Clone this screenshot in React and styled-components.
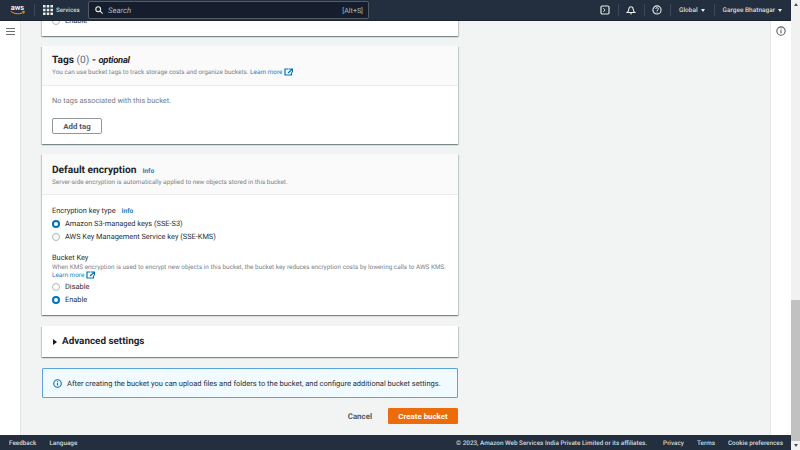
import React from 'react';
import styled, { createGlobalStyle } from 'styled-components';

const GlobalStyle = createGlobalStyle`
  html, body { margin: 0; padding: 0; height: 100%; overflow: hidden; }
  #root { height: 100%; }
  * { box-sizing: border-box; }
  body { font-family: Roboto, "Noto Sans", sans-serif; color: #16191f; text-rendering: geometricPrecision; }
`;

const Page = styled.div`
  display: flex;
  width: 800px;
  height: 450px;
  overflow: hidden;
  background: #f2f3f3;
`;

const Console = styled.div`
  flex: 1;
  min-width: 0;
  display: flex;
  flex-direction: column;
`;

const TopBar = styled.header`
  flex: 0 0 21px;
  display: flex;
  align-items: center;
  background: #232f3e;
  color: #d5dbdb;
  font-size: 6.5px;
  font-weight: 500;
  border-bottom: 1px solid #1a2430;
`;

const Logo = styled.svg`
  width: 17px;
  height: 12px;
  margin-left: 9px;
`;

const BarDivider = styled.span`
  width: 1px;
  height: 12px;
  background: #3b4757;
  margin: ${p => p.$margin || '0'};
`;

const Services = styled.div`
  display: flex;
  align-items: center;
  gap: 3px;
  width: 45px;
  font-size: 6.2px;
`;

const SearchBox = styled.div`
  width: 281px;
  height: 18px;
  display: flex;
  align-items: center;
  padding: 0 5px 0 6px;
  background: #161e2d;
  border: 1px solid #545b64;
  border-radius: 2px;
  font-size: 7.1px;
  font-weight: 400;
  color: #aab7b8;
`;

const SearchText = styled.span`
  flex: 1;
  margin-left: 5px;
  font-style: italic;
  font-size: 7.8px;
`;

const BarRight = styled.div`
  margin-left: auto;
  padding-right: 9px;
  display: flex;
  align-items: center;
`;

const BarIcon = styled.svg`
  width: 10px;
  height: 10px;
  display: block;
`;

const Caret = styled.i`
  display: inline-block;
  width: 0;
  height: 0;
  margin-left: 3px;
  border-left: 2.6px solid transparent;
  border-right: 2.6px solid transparent;
  border-top: 3.4px solid #e8ecec;
`;

const BarMenu = styled.span`
  display: flex;
  align-items: center;
  white-space: nowrap;
`;

const Middle = styled.div`
  flex: 1;
  min-height: 0;
  display: flex;
`;

const Rail = styled.aside`
  width: ${p => p.$width}px;
  flex: none;
  background: #fff;
  display: flex;
  justify-content: center;
  padding-top: ${p => p.$top}px;
  border-${p => p.$side}: 1px solid #e3e5e5;
`;

const Content = styled.main`
  flex: 1;
  min-width: 0;
  height: 414px;
  overflow: hidden;
  display: flex;
  flex-direction: column;
  justify-content: flex-end;
  padding: 0 312px 11px 21px;
`;

const Card = styled.section`
  flex: none;
  background: #fff;
  box-shadow: 0 1px 1px 0 rgba(0, 28, 36, 0.3), 1px 1px 1px 0 rgba(0, 28, 36, 0.15), -1px 1px 1px 0 rgba(0, 28, 36, 0.15);
  margin-bottom: ${p => p.$gap || 10}px;
`;

const CardHead = styled.div`
  height: ${p => p.$height}px;
  padding: ${p => p.$top}px 10px 0;
  background: #fafafa;
  border-bottom: 1px solid #eaeded;
`;

const CardBody = styled.div`
  padding: ${p => p.$padding};
`;

const Title = styled.h2`
  margin: 0;
  font-size: 10.2px;
  line-height: 14px;
  font-weight: 700;
  color: #1f252c;
`;

const TitleMuted = styled.span`
  font-weight: 400;
  color: #687078;
`;

const Optional = styled.em`
  font-size: 9.4px;
  letter-spacing: -0.25px;
`;

const Info = styled.a`
  color: #1a7fc1;
  font-size: 6.6px;
  font-weight: 700;
  margin-left: ${p => p.$left}px;
`;

const Description = styled.p`
  margin: ${p => p.$margin || '0'};
  font-size: 6.4px;
  line-height: 8px;
  color: #7a8288;
`;

const Learn = styled.a`
  color: #1a7fc1;
  display: ${p => (p.$block ? 'flex' : 'inline-flex')};
  align-items: center;
  gap: 2px;
  vertical-align: top;
`;

const ExternalIcon = styled.svg`
  width: 9px;
  height: 8px;
`;

const BodyText = styled.p`
  margin: 0;
  font-size: 7.4px;
  line-height: 10px;
  color: #747c82;
`;

const OutlineButton = styled.button`
  display: block;
  width: 50px;
  height: 16px;
  margin-top: 12px;
  padding: 0;
  background: #fff;
  border: 1px solid #8f969c;
  border-radius: 2px;
  font: 700 7.9px Roboto, sans-serif;
  color: #545b64;
`;

const FieldLabel = styled.div`
  font-size: 7.4px;
  line-height: 10px;
  color: #2a3037;
  margin-top: ${p => p.$top || 0}px;
`;

const RadioRow = styled.label`
  display: flex;
  align-items: center;
  gap: 5px;
  height: 13px;
  font-size: 7.4px;
  color: #2a3037;
`;

const Radio = styled.span`
  width: 8px;
  height: 8px;
  border-radius: 50%;
  flex: none;
  background: #fff;
  border: ${p => (p.$checked ? '2.4px solid #0073bb' : '1px solid #aab7b8')};
`;

const RadioGroup = styled.div`
  margin-top: ${p => p.$top || 0}px;
`;

const Disclosure = styled.div`
  height: 31px;
  display: flex;
  align-items: center;
  padding-left: 11px;
  gap: 5px;
  font-size: 9.9px;
  font-weight: 700;
  color: #1f252c;
`;

const Triangle = styled.i`
  width: 0;
  height: 0;
  border-top: 3px solid transparent;
  border-bottom: 3px solid transparent;
  border-left: 4.5px solid #16191f;
`;

const Alert = styled.div`
  flex: none;
  height: 30px;
  display: flex;
  align-items: center;
  gap: 5px;
  padding-left: 10px;
  margin-bottom: 10px;
  background: #f1faff;
  border: 1px solid #5aa5d6;
  border-radius: 1px;
  font-size: 7.5px;
  color: #2a3037;
  white-space: nowrap;
`;

const Actions = styled.div`
  flex: none;
  display: flex;
  justify-content: flex-end;
  align-items: center;
  gap: 16px;
`;

const Cancel = styled.span`
  font-size: 7.9px;
  font-weight: 700;
  color: #545b64;
`;

const Primary = styled.button`
  width: 70px;
  height: 16px;
  padding: 0;
  background: #ec6c0c;
  border: 1px solid #ec6c0c;
  border-radius: 1px;
  font: 700 7.9px Roboto, sans-serif;
  color: #fff;
`;

const Footer = styled.footer`
  flex: 0 0 15px;
  display: flex;
  align-items: center;
  padding: 0 8px 0 9px;
  background: #232f3e;
  color: #d5dbdb;
  font-size: 6.35px;
  font-weight: 500;
`;

const FooterItem = styled.span`
  margin-left: ${p => (p.$auto ? 'auto' : `${p.$left || 0}px`)};
  white-space: nowrap;
`;

const Scrollbar = styled.div`
  width: 9px;
  flex: none;
  display: flex;
  flex-direction: column;
  align-items: center;
  background: #f1f1f1;
`;

const ScrollArrow = styled.i`
  flex: none;
  width: 0;
  height: 0;
  margin: ${p => p.$margin};
  border-left: 2.5px solid transparent;
  border-right: 2.5px solid transparent;
  ${p => (p.$up ? 'border-bottom: 3px solid #505050;' : 'border-top: 3px solid #505050;')}
`;

const ScrollThumb = styled.div`
  width: 100%;
  height: 141px;
  margin-top: auto;
  background: #c1c1c1;
`;

const External = () => (
  <ExternalIcon viewBox="0 0 18 16" fill="none" stroke="#0073bb" strokeWidth="2.4">
    <path d="M8 2H2v12h13V9" />
    <path d="M9 2h8v7M16 3l-8 7" />
  </ExternalIcon>
);

export default function App() {
  return (
    <Page>
      <GlobalStyle />
      <Console>
        <TopBar>
          <Logo viewBox="0 0 34 24" fill="none">
            <text x="17" y="12" textAnchor="middle" fontFamily="Roboto" fontSize="15" fontWeight="500" fill="#fff">aws</text>
            <path d="M4 15c8 6 18 6 26 1" stroke="#ff9900" strokeWidth="2" strokeLinecap="round" />
            <path d="M26 14.5l5 .5-2 4.5" stroke="#ff9900" strokeWidth="1.6" />
          </Logo>
          <BarDivider $margin="0 8px" />
          <Services>
            <svg width="10" height="10" viewBox="0 0 9 9" fill="#e8ecec">
              <path d="M0 0h2.3v2.3H0zM3.35 0h2.3v2.3h-2.3zM6.7 0H9v2.3H6.7zM0 3.35h2.3v2.3H0zM3.35 3.35h2.3v2.3h-2.3zM6.7 3.35H9v2.3H6.7zM0 6.7h2.3V9H0zM3.35 6.7h2.3V9h-2.3zM6.7 6.7H9V9H6.7z" />
            </svg>
            Services
          </Services>
          <SearchBox>
            <svg width="8" height="8" viewBox="0 0 10 10" fill="none" stroke="#e8ecec" strokeWidth="1.4">
              <circle cx="4" cy="4" r="3" />
              <path d="M6.2 6.2L9.5 9.5" />
            </svg>
            <SearchText>Search</SearchText>
            <span>[Alt+S]</span>
          </SearchBox>
          <BarRight>
            <BarIcon viewBox="0 0 12 12" fill="none" stroke="#e8ecec" strokeWidth="1.4">
              <rect x="1.2" y="1.2" width="9.6" height="9.6" rx="1.4" />
              <path d="M4 3.8L6.2 6 4 8.2" strokeWidth="1.1" />
            </BarIcon>
            <BarDivider $margin="0 7px 0 8px" />
            <BarIcon viewBox="0 0 12 12" fill="none" stroke="#e8ecec" strokeWidth="1.3">
              <path d="M1.5 9c1.2-1 1.6-2 1.8-3.6C3.5 3.4 4.5 2 6 2s2.5 1.4 2.7 3.4C8.9 7 9.3 8 10.5 9z" />
              <path d="M5 10.4h2" />
            </BarIcon>
            <BarDivider $margin="0 7px 0 8px" />
            <BarIcon viewBox="0 0 12 12" fill="none" stroke="#e8ecec" strokeWidth="1.3">
              <circle cx="6" cy="6" r="4.9" />
              <path d="M4.4 4.6C4.5 3.6 5.2 3.2 6 3.2c1 0 1.7.6 1.7 1.4 0 1.2-1.7 1.3-1.7 2.6M6 8v1" strokeWidth="1.1" />
            </BarIcon>
            <BarDivider $margin="0 8px 0 8px" />
            <BarMenu>Global<Caret /></BarMenu>
            <BarDivider $margin="0 8px 0 9px" />
            <BarMenu>Gargee Bhatnagar<Caret /></BarMenu>
          </BarRight>
        </TopBar>
        <Middle>
          <Rail $width={21} $top={6} $side="right">
            <svg width="9" height="9" viewBox="0 0 9 9" fill="none" stroke="#687078" strokeWidth="1.1">
              <path d="M0 1.5h9M0 4.5h9M0 7.5h9" />
            </svg>
          </Rail>
          <Content>
            <Card>
              <CardBody $padding="0 10px 9px">
                <RadioRow><Radio /><span>Enable</span></RadioRow>
              </CardBody>
            </Card>
            <Card>
              <CardHead $height={40} $top={8}>
                <Title>Tags <TitleMuted>(0)</TitleMuted> - <Optional>optional</Optional></Title>
                <Description>
                  You can use bucket tags to track storage costs and organize buckets. <Learn>Learn more <External /></Learn>
                </Description>
              </CardHead>
              <CardBody $padding="10px 10px 10px">
                <BodyText>No tags associated with this bucket.</BodyText>
                <OutlineButton>Add tag</OutlineButton>
              </CardBody>
            </Card>
            <Card $gap={11}>
              <CardHead $height={41} $top={10}>
                <Title>Default encryption<Info $left={6}>Info</Info></Title>
                <Description>Server-side encryption is automatically applied to new objects stored in this bucket.</Description>
              </CardHead>
              <CardBody $padding="11px 10px 9px">
                <FieldLabel>Encryption key type<Info $left={6}>Info</Info></FieldLabel>
                <RadioGroup $top={1}>
                  <RadioRow><Radio $checked /><span>Amazon S3-managed keys (SSE-S3)</span></RadioRow>
                  <RadioRow><Radio /><span>AWS Key Management Service key (SSE-KMS)</span></RadioRow>
                </RadioGroup>
                <FieldLabel $top={10}>Bucket Key</FieldLabel>
                <Description>
                  When KMS encryption is used to encrypt new objects in this bucket, the bucket key reduces encryption costs by lowering calls to AWS KMS.
                  <Learn $block>Learn more <External /></Learn>
                </Description>
                <RadioGroup $top={1}>
                  <RadioRow><Radio /><span>Disable</span></RadioRow>
                  <RadioRow><Radio $checked /><span>Enable</span></RadioRow>
                </RadioGroup>
              </CardBody>
            </Card>
            <Card $gap={11}>
              <Disclosure><Triangle />Advanced settings</Disclosure>
            </Card>
            <Alert>
              <svg width="9" height="9" viewBox="0 0 12 12" fill="none" stroke="#0073bb" strokeWidth="1.5">
                <circle cx="6" cy="6" r="5" />
                <path d="M6 5.2v3.6M6 3v1.3" />
              </svg>
              After creating the bucket you can upload files and folders to the bucket, and configure additional bucket settings.
            </Alert>
            <Actions>
              <Cancel>Cancel</Cancel>
              <Primary>Create bucket</Primary>
            </Actions>
          </Content>
          <Rail $width={21} $top={5} $side="left">
            <svg width="10" height="10" viewBox="0 0 12 12" fill="none" stroke="#545b64" strokeWidth="1.3">
              <circle cx="6" cy="6" r="5" />
              <path d="M6 5.2v3.6M6 3v1.3" />
            </svg>
          </Rail>
        </Middle>
        <Footer>
          <FooterItem>Feedback</FooterItem>
          <FooterItem $left={13}>Language</FooterItem>
          <FooterItem $auto>© 2023, Amazon Web Services India Private Limited or its affiliates.</FooterItem>
          <FooterItem $left={16}>Privacy</FooterItem>
          <FooterItem $left={13}>Terms</FooterItem>
          <FooterItem $left={13}>Cookie preferences</FooterItem>
        </Footer>
      </Console>
      <Scrollbar>
        <ScrollArrow $up $margin="3px 0 0" />
        <ScrollThumb />
        <ScrollArrow $margin="3px 0 3px" />
      </Scrollbar>
    </Page>
  );
}
